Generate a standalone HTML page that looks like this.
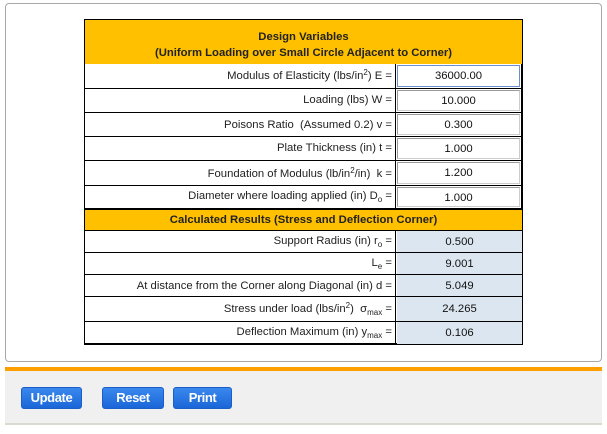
<!DOCTYPE html>
<html><head><meta charset="utf-8"><style>
*{margin:0;padding:0;box-sizing:border-box}
body{width:607px;height:434px;background:#fff;position:relative;font-family:"Liberation Sans",sans-serif;overflow:hidden}
.panel{position:absolute;left:5px;top:3px;width:597px;height:359px;border:1px solid #a8a8a8;border-radius:4px}
.tbl{position:absolute;left:84px;top:19px;width:439px;height:326px;border:1px solid #000;border-right:2px solid #000;border-bottom:2px solid #000}
.hdr{position:absolute;left:0;width:437px;background:#ffc000;font-weight:bold;font-size:11.3px;color:#222;text-align:center}
.row{position:absolute;left:0;width:437px;border-top:1px solid #000}
.lab{position:absolute;left:0;width:311px;top:0;bottom:0;text-align:right;padding-right:3px;font-size:11.3px;color:#222;border-right:1px solid #000}
.val{position:absolute;left:312px;right:2px;top:1px;bottom:1px;border:1px solid #9a9a9a;border-right-color:#ccc;border-bottom-color:#ccc;text-align:center;font-size:11.3px;color:#111}
.res .val{left:312px;right:0;top:0;bottom:0;border:none;background:#dce6f0}
sub,sup{font-size:8px;line-height:0}
sup{vertical-align:4px}
sub{vertical-align:-3px}
.bar{position:absolute;left:5px;top:367px;width:597px;height:4px;background:#ffa000}
.foot{position:absolute;left:5px;top:371px;width:597px;height:54px;background:#f0f0f0;border-bottom:2px solid #dadad0}
.btn{position:absolute;top:387px;height:22px;border:1px solid #1a5fc8;border-radius:3px;background:linear-gradient(#3a88ee,#1a66d8);color:#fff;font-weight:bold;font-size:13px;text-align:center;line-height:20px;letter-spacing:-0.4px}
</style></head><body>
<div class="panel"></div>
<div class="tbl">
 <div class="hdr" style="top:0;height:44px;padding-top:9px;line-height:16px">Design Variables<br>(Uniform Loading over Small Circle Adjacent to Corner)</div>
 <div class="row" style="top:44px;height:24px;border-top:none"><div class="lab" style="line-height:24px">Modulus of Elasticity (lbs/in<sup>2</sup>) E =</div><div class="val" style="line-height:20px;border:1px solid #6b8fc8">36000.00</div></div>
 <div class="row" style="top:68px;height:24px"><div class="lab" style="line-height:22px">Loading (lbs) W =</div><div class="val" style="line-height:20px">10.000</div></div>
 <div class="row" style="top:92px;height:24px"><div class="lab" style="line-height:24px">Poisons Ratio &nbsp;(Assumed 0.2) v =</div><div class="val" style="line-height:20px">0.300</div></div>
 <div class="row" style="top:116px;height:24px"><div class="lab" style="line-height:22px">Plate Thickness (in) t =</div><div class="val" style="line-height:20px">1.000</div></div>
 <div class="row" style="top:140px;height:25px"><div class="lab" style="line-height:26px">Foundation of Modulus (lb/in<sup>2</sup>/in) &nbsp;k =</div><div class="val" style="line-height:20px">1.200</div></div>
 <div class="row" style="top:165px;height:23px"><div class="lab" style="line-height:20px">Diameter where loading applied (in) D<sub>o</sub> =</div><div class="val" style="line-height:20px">1.000</div></div>
 <div class="hdr" style="top:188px;height:22px;line-height:20px;border-top:2px solid #000">Calculated Results (Stress and Deflection Corner)</div>
 <div class="row res" style="top:210px;height:22px"><div class="lab" style="line-height:20px">Support Radius (in) r<sub>o</sub> =</div><div class="val" style="line-height:22px">0.500</div></div>
 <div class="row res" style="top:232px;height:22px"><div class="lab" style="line-height:20px">L<sub>e</sub> =</div><div class="val" style="line-height:22px">9.001</div></div>
 <div class="row res" style="top:254px;height:22px"><div class="lab" style="line-height:22px">At distance from the Corner along Diagonal (in) d =</div><div class="val" style="line-height:22px">5.049</div></div>
 <div class="row res" style="top:276px;height:25px"><div class="lab" style="line-height:24px">Stress under load (lbs/in<sup>2</sup>) &nbsp;σ<sub>max</sub> =</div><div class="val" style="line-height:24px">24.265</div></div>
 <div class="row res" style="top:301px;height:23px"><div class="lab" style="line-height:20px">Deflection Maximum (in) y<sub>max</sub> =</div><div class="val" style="line-height:22px">0.106</div></div>
</div>
<div class="bar"></div>
<div class="foot"></div>
<div class="btn" style="left:21px;width:61px">Update</div>
<div class="btn" style="left:102px;width:62px">Reset</div>
<div class="btn" style="left:173px;width:59px">Print</div>
</body></html>
